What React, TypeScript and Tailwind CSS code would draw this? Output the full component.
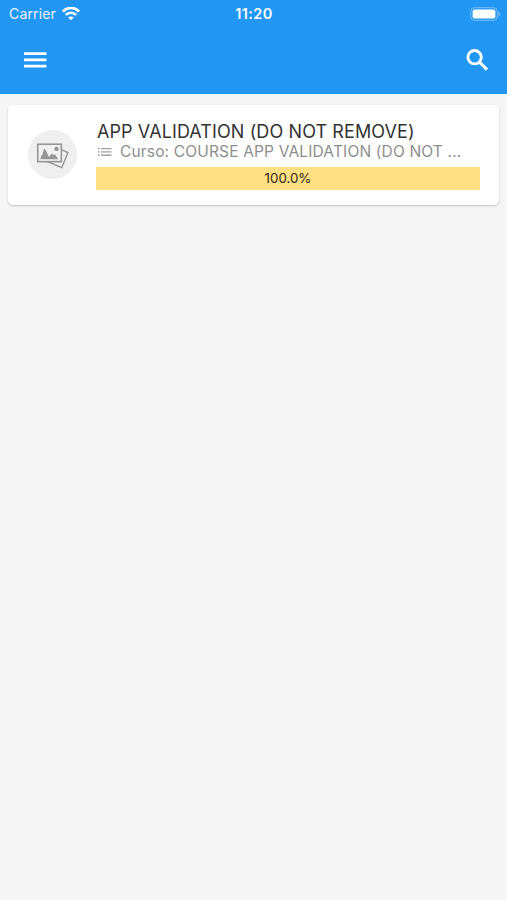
function StatusBar() {
  return (
    <div className="grid h-7 grid-cols-3 items-center pl-[9px] pr-[6px]">
      <div className="flex items-center gap-[6px]">
        <span className="text-[14px] leading-7 tracking-[0.15px] text-white/90">Carrier</span>
        <svg width="18" height="14" viewBox="0 0 18 14" fill="none" stroke="white">
          <path d="M0.9 4.5C5.4 -0.2 12.6 -0.2 17.1 4.5" strokeWidth="2.7" />
          <path d="M3.8 7.9C6.7 5 11.3 5 14.2 7.9" strokeWidth="2.5" />
          <path d="M9 13.3L6.2 10.6C7.8 9.1 10.2 9.1 11.8 10.6Z" fill="white" stroke="none" />
        </svg>
      </div>
      <span className="whitespace-nowrap pr-[2px] text-center text-[14.5px] font-semibold leading-7 tracking-[0.4px] text-white">11:20</span>
      <svg className="justify-self-end" width="31" height="14" viewBox="0 0 31 14">
        <rect x="0.7" y="0.7" width="26.6" height="12.6" rx="3.8" fill="none" stroke="white" strokeOpacity="0.4" />
        <rect x="2.6" y="2.5" width="22.8" height="9" rx="2" fill="white" />
        <path d="M28.7 4.8C30.8 5.5 30.8 8.5 28.7 9.2Z" fill="white" fillOpacity="0.45" />
      </svg>
    </div>
  );
}

function Toolbar() {
  return (
    <div className="flex h-[66px] items-center justify-between pl-[20px] pr-[15px] pb-[2px]">
      <svg width="30" height="30" viewBox="0 0 30 30" fill="white">
        <path d="M4 7.3h22.4v2.6H4zM4 13.6h22.4v2.6H4zM4 19.8h22.4v2.6H4z" />
      </svg>
      <svg width="30" height="30" viewBox="0 0 30 30" fill="none" stroke="white">
        <circle cx="12.6" cy="12.2" r="6.7" strokeWidth="2.9" />
        <path d="M17.4 17L25 24.6" strokeWidth="3.1" />
      </svg>
    </div>
  );
}

function PicturesIcon() {
  return (
    <svg width="34" height="28" viewBox="0 0 34 28" fill="none" stroke="#959595">
      <path d="M26.2 6.9L31.9 9.6L25.8 24.7L11.3 18.5" strokeWidth="1.4" />
      <rect x="1.75" y="1.25" width="23.6" height="17.4" fill="#f1f1f1" strokeWidth="1.6" />
      <path d="M4.3 16.3L5.4 12.6L6.3 12L8 5.8L9.3 6.5L10.5 8.4L12.8 14L16 10.4L17.7 12.1L19.1 11.4L22.3 16.3Z" fill="#959595" stroke="none" />
      <circle cx="20.5" cy="5.9" r="2.2" fill="#959595" stroke="none" />
    </svg>
  );
}

function CourseCard() {
  return (
    <article className="mx-2 mt-[11px] flex h-[100px] rounded-[5px] bg-white pl-5 pr-[19px] shadow-[0_1px_2px_rgba(0,0,0,0.22)]">
      <div className="mt-[25px] flex size-[49px] shrink-0 items-center justify-center rounded-full bg-[#efefef] pl-px pt-[5px]">
        <PicturesIcon />
      </div>
      <div className="ml-[19px] min-w-0 flex-1 pt-[17px]">
        <h1 className="whitespace-nowrap pl-px text-[18px] leading-5 tracking-[0.1px] text-[#333333]">
          APP VALIDATION (DO NOT REMOVE)
        </h1>
        <div className="flex h-5 items-center gap-2 pl-[2px] text-[#8e8e8e]">
          <svg width="14" height="10" viewBox="0 0 14 10" fill="#a0a0a0">
            <path d="M0 1h1.6v1.3H0zM0 4.3h1.6v1.3H0zM0 7.6h1.6v1.3H0zM3 1h10.5v1.3H3zM3 4.3h10.5v1.3H3zM3 7.6h10.5v1.3H3z" />
          </svg>
          <span className="whitespace-nowrap text-[15.5px] leading-5 tracking-[0.16px]">
            Curso: COURSE APP VALIDATION (DO NOT ...
          </span>
        </div>
        <div className="mt-[5px] h-[23px] bg-[#ffdf82] text-center text-[13.3px] leading-[23px] text-[#2d281c]">
          100.0%
        </div>
      </div>
    </article>
  );
}

export default function App() {
  return (
    <main className="h-[900px] w-full overflow-hidden bg-[#f5f5f5] font-['Inter','Liberation_Sans',sans-serif]">
      <header className="h-[94px] bg-[#2196f3]">
        <StatusBar />
        <Toolbar />
      </header>
      <CourseCard />
    </main>
  );
}
